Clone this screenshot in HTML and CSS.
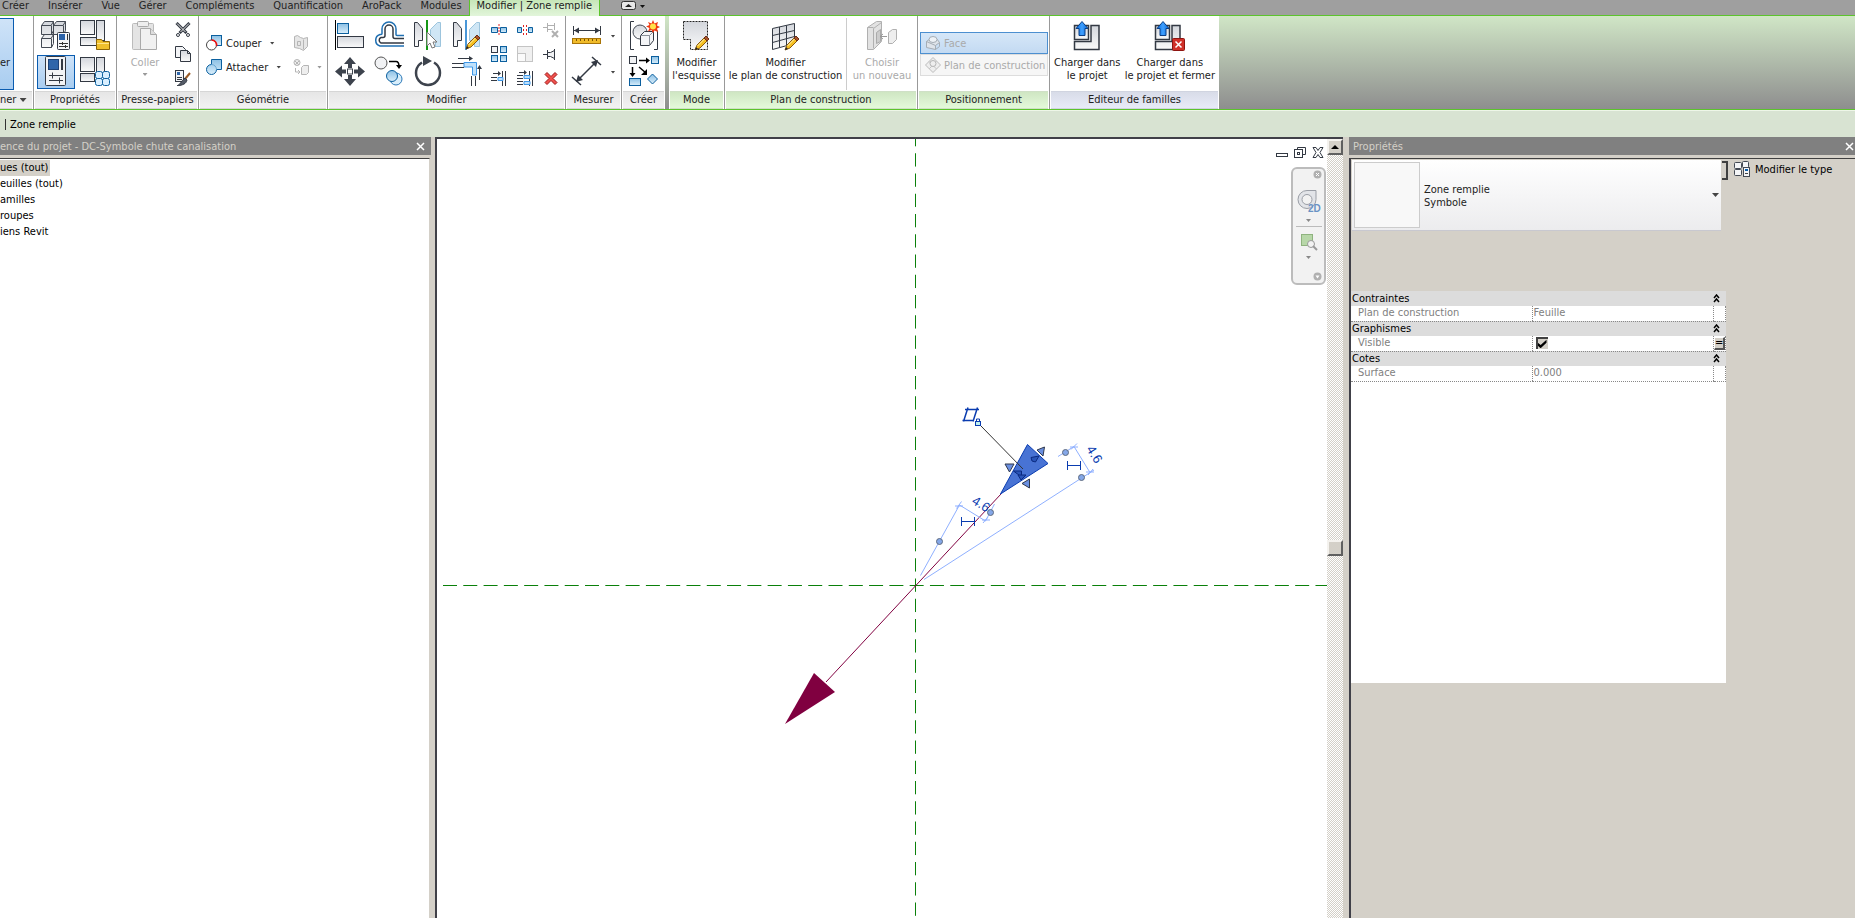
FILE: index.html
```html
<!DOCTYPE html>
<html lang="fr">
<head>
<meta charset="utf-8">
<title>Modifier | Zone remplie</title>
<link rel="stylesheet" href="styles.css">
</head>
<body>
<svg class="defs" aria-hidden="true">
  <defs>
    <linearGradient id="g-grey" x1="0" y1="0" x2="0" y2="1"><stop offset="0" stop-color="#d3d6dc"/><stop offset="1" stop-color="#fafafa"/></linearGradient>
    <linearGradient id="g-blue" x1="0" y1="0" x2="0" y2="1"><stop offset="0" stop-color="#8cc0e4"/><stop offset="1" stop-color="#d9eefb"/></linearGradient>
    <linearGradient id="g-arrow" x1="0" y1="0" x2="1" y2="0"><stop offset="0" stop-color="#0a68d8"/><stop offset=".5" stop-color="#3fa0ff"/><stop offset="1" stop-color="#0a68d8"/></linearGradient>
    <symbol id="pencil" viewBox="0 0 16 16">
      <path d="M1 15l2-5 7-7 3 3-7 7z" fill="#f6c021" stroke="#8a5a10"/><path d="M3.500 11l7-7" stroke="#fff3b0"/><path d="M10 3l2-2 3 3-2 2z" fill="#a8532c" stroke="#6d2f15"/><path d="M1 15l1-3 2 2z" fill="#222"/>
    </symbol>
    <symbol id="chev" viewBox="0 0 7 9"><path d="M1 4l2.500-3L6 4M1 8l2.500-3L6 8" fill="none" stroke="#000" stroke-width="1.500"/></symbol>
  </defs>
</svg>

<header>
  <nav class="tabs">
    <a href="#">Créer</a><a href="#">Insérer</a><a href="#">Vue</a><a href="#">Gérer</a><a href="#">Compléments</a><a href="#">Quantification</a><a href="#">AroPack</a><a href="#">Modules</a><a href="#" class="active">Modifier | Zone remplie</a>
    <button class="mini" aria-label="Réduire le ruban"><svg width="26" height="9"><rect x=".5" y=".5" width="14" height="8" rx="2" fill="#e8e8e8" stroke="#333"/><path d="M4 6h7L7.500 3z" fill="#222"/><path d="M19 4h5l-2.500 3z" fill="#111"/></svg></button>
  </nav>

  <div class="ribbon">
    <section class="panel first">
      <div class="body"><button class="select-btn">er</button></div>
      <h2>ner <i class="caret"></i></h2>
    </section>

    <section class="panel props">
      <div class="body">
        <button class="tool" aria-label="Propriétés du type"><svg width="32" height="32"><g fill="url(#g-grey)" stroke="#444a54"><path d="M1.500 5.500l3-4h9v9l-2 4h-10zM13.500 5.500l3-4h9v9l-2 4h-10zM1.500 18.500l3-4h9v9l-2 4h-10z"/><path d="M1.500 5.500h9.500l2.500-4M11.500 5.500v9M13.500 5.500H23l2.500-4M23.500 5.500v9M1.500 18.500h9.500l2.500-4M11.500 18.500v9" fill="none"/></g><rect x="17.500" y="12.500" width="12" height="17" rx="1" fill="#f4f5f7" stroke="#333943"/><rect x="19" y="14" width="6" height="6" fill="#2b62a8"/><path d="M27.500 14v6M19 23.500h9M19 26.500h9M22.500 22v3M25.500 25v3" stroke="#333"/></svg></button>
        <button class="tool" aria-label="Types de familles"><svg width="32" height="32"><g fill="url(#g-grey)" stroke="#333943"><rect x="1.500" y=".5" width="14" height="14"/><rect x="17.500" y=".5" width="8" height="20"/><rect x="1.500" y="17.500" width="16" height="8"/></g><path d="M17.500 19.500h5l1.500 2h6.500v8h-13z" fill="#f0c02c" stroke="#8c6508"/><path d="M18 23.500h12" stroke="#ffe58a"/></svg></button>
        <button class="tool on" aria-label="Propriétés"><svg width="32" height="32"><rect x="5.500" y=".5" width="20" height="29" rx="1" fill="#f2f3f5" stroke="#333943"/><rect x="8.500" y="3.500" width="10" height="10" fill="#2f66aa" stroke="#1d4379"/><path d="M22 3v11" stroke="#333943" stroke-width="2"/><path d="M9 19.500h14M9 24.500h14M12.500 16.500v6M19.500 21.500v6" stroke="#333943"/></svg></button>
        <button class="tool" aria-label="Catégorie"><svg width="32" height="32"><g fill="url(#g-grey)" stroke="#333943"><rect x="1.500" y="1.500" width="14" height="14"/><rect x="17.500" y="1.500" width="8" height="18"/><rect x="1.500" y="17.500" width="14" height="8"/></g><g fill="#d9efff" stroke="#0b5f9e"><rect x="16.500" y="15.500" width="7" height="7" rx="2"/><rect x="23.500" y="15.500" width="7" height="7" rx="2"/><rect x="16.500" y="22.500" width="7" height="7" rx="2"/><rect x="23.500" y="22.500" width="7" height="7" rx="2"/></g></svg></button>
      </div>
      <h2>Propriétés</h2>
    </section>

    <section class="panel clip">
      <div class="body">
        <button class="big off"><svg width="32" height="32"><rect x="3.500" y="3.500" width="21" height="26" rx="1" fill="#e4e4e4" stroke="#bbb"/><rect x="8.500" y="1.500" width="11" height="5" rx="1" fill="#eee" stroke="#aaa"/><path d="M11.500 8.500h10l6 6v15h-16z" fill="#f1f1f1" stroke="#aaa"/><path d="M21.500 8.500v6h6" fill="#ddd" stroke="#aaa"/></svg><span>Coller</span><i class="caret"></i></button>
        <div class="stack">
          <button class="sm" aria-label="Couper"><svg width="16" height="16"><path d="M1.500 1l10 10M14.500 1l-10 10" stroke="#333943" stroke-width="3"/><path d="M2 1.500l8.500 8.500M14 1.500L5.500 10" stroke="#e8e8e8"/><circle cx="3" cy="13" r="1.500" fill="#fff" stroke="#333943"/><circle cx="13" cy="13" r="1.500" fill="#fff" stroke="#333943"/></svg></button>
          <button class="sm" aria-label="Copier"><svg width="16" height="16"><path d="M.5.500h7l3 3v8H.500z" fill="#f3f4f6" stroke="#333943"/><path d="M5.500 4.500h7l3 3v8h-10z" fill="url(#g-grey)" stroke="#333943"/><path d="M12.500 4.500v3h3" fill="none" stroke="#333943"/></svg></button>
          <button class="sm" aria-label="Copier les propriétés"><svg width="16" height="16"><rect x=".5" y=".5" width="8" height="11" fill="#f3f4f6" stroke="#333943"/><rect x="2" y="2" width="3" height="3" fill="#2f66aa"/><path d="M2 7.500h5M2 9.500h5" stroke="#333943"/><path d="M15 3l-5 6" stroke="#9a5b26" stroke-width="2"/><path d="M10 8l2 2c-1 4-4 5-10 6 3-1 4-5 8-8z" fill="#555c68" stroke="#333943"/></svg></button>
        </div>
      </div>
      <h2>Presse-papiers</h2>
    </section>

    <section class="panel geom">
      <div class="body">
        <div class="geo-col">
          <button class="row"><svg width="16" height="16"><rect x="5.500" y=".5" width="10" height="10" fill="url(#g-blue)" stroke="#0b5f9e"/><circle cx="5.500" cy="10" r="5" fill="#fff" stroke="#444"/><path d="M5.500 5a5 5 0 0 1 5 6" fill="none" stroke="#f01010" stroke-width="1.500"/></svg>Couper<i class="caret"></i></button>
          <button class="row"><svg width="16" height="16"><path d="M5.500 5.500v-5h10v10h-5a5 5 0 1 1-5-5z" fill="url(#g-blue)" stroke="#0b5f9e"/><path d="M10.500 10.500a5 5 0 0 0-5-5" fill="none" stroke="#67a6d2"/></svg>Attacher<i class="caret"></i></button>
        </div>
        <div class="geo-col">
          <button class="row off" aria-label="Ouverture"><svg width="16" height="16"><path d="M1.500 1.500l3-1 3 2 3 1 4-1v9l-4 4-4-2-5-1z" fill="#e6e6e6" stroke="#b5b5b5"/><path d="M10.500 4.500v10M4.500 6.500h3v4h-3z" fill="none" stroke="#b5b5b5"/></svg></button>
          <button class="row off" aria-label="Démolir"><svg width="16" height="16"><circle cx="4" cy="3.500" r="3" fill="#eee" stroke="#b5b5b5"/><path d="M2 2l4 4M6 2l-4 4M2.500 9v4h4M5 11l2 2-2 2" fill="none" stroke="#b5b5b5"/><path d="M8.500 8.500l2-2h5v7l-2 2h-5z" fill="#eee" stroke="#b5b5b5"/></svg><i class="caret"></i></button>
        </div>
      </div>
      <h2>Géométrie</h2>
    </section>

    <section class="panel modify">
      <div class="body">
        <div class="grid4">
          <button class="tool" aria-label="Aligner"><svg width="32" height="32"><path d="M1.500 0v30" stroke="#000"/><rect x="3.500" y="3.500" width="11" height="10" fill="url(#g-blue)" stroke="#0b5f9e"/><rect x="3.500" y="16.500" width="26" height="11" fill="url(#g-grey)" stroke="#333943"/></svg></button>
          <button class="tool" aria-label="Décaler"><svg width="32" height="32"><path d="M31 15.500h-7a1 1 0 0 1-1-1V9a7 7 0 0 0-14 0v4.500a1 1 0 0 1-1 1H7a6 6 0 0 0 0 11.500h24" fill="none" stroke="#1f6fb2" stroke-width="1.500"/><path d="M31 18.500H22a2 2 0 0 1-2-2V9a4 4 0 0 0-8 0v6.500a2 2 0 0 1-2 2H8a3 3 0 0 0 0 5.500h23" fill="none" stroke="#333943" stroke-width="1.500"/></svg></button>
          <button class="tool" aria-label="Symétrie par axe"><svg width="32" height="32"><path d="M2.500 2.500h3l5 6v12h-4v6h-4z" fill="url(#g-grey)" stroke="#333943"/><path d="M28.500 2.500h-3l-7 7v11h5v6h5z" fill="#cfe6f5" stroke="#9cc4dd"/><path d="M15 0v30" stroke="#159715" stroke-width="2"/><path d="M15 12v14l3-3 2 5 3-1-2-5h4z" fill="#fff" stroke="#777"/></svg></button>
          <button class="tool" aria-label="Symétrie, dessiner un axe"><svg width="32" height="32"><path d="M2.500 2.500h3l5 6v12h-4v6h-4z" fill="url(#g-grey)" stroke="#333943"/><path d="M28.500 2.500h-3l-7 7v11h5v6h5z" fill="#cfe6f5" stroke="#9cc4dd"/><path d="M15 0v30" stroke="#4a97d8" stroke-width="2"/><use href="#pencil" x="14" y="14" width="16" height="16"/></svg></button>
          <button class="tool" aria-label="Déplacer"><svg width="32" height="32"><path d="M16 1l6 7h-4v4h-4V8h-4zM16 30l6-7h-4v-4h-4v4h-4zM1 15.500l7-6v4h4v4H8v4zM31 15.500l-7-6v4h-4v4h4v4z" fill="#3d434d"/><rect x="13.500" y="13" width="5" height="5" fill="#fff" stroke="#3d434d"/></svg></button>
          <button class="tool" aria-label="Copier"><svg width="32" height="32"><circle cx="8" cy="7" r="6" fill="#f1f2f4" stroke="#555"/><circle cx="23" cy="23" r="6" fill="#d9eefb" stroke="#2b78b8"/><circle cx="19" cy="20" r="5.500" fill="url(#g-blue)" stroke="#0b5f9e"/><path d="M16 5.500h7q3 0 3 5" fill="none" stroke="#000" stroke-width="1.500"/><path d="M23 9h6l-3 4z"/></svg></button>
          <button class="tool" aria-label="Rotation"><svg width="32" height="32"><path d="M10 6.500A12 12 0 1 0 22 6.500" fill="none" stroke="#3d434d" stroke-width="2.500"/><path d="M11 0l9 5-9 5z" fill="#3d434d"/></svg></button>
          <button class="tool" aria-label="Ajuster/prolonger"><svg width="32" height="32"><path d="M1 7.500h12M1 11.500h12M20.500 20v10M24.500 20v10" stroke="#333943"/><path d="M13 6.500h12.500V19h-4v-8H13z" fill="#bfe0fa" stroke="#3d97e8"/><path d="M7 2.500h14M28.500 24V11" stroke="#333943"/><path d="M18 0l4 2.500L18 5zM26 13l2.500-4 2.500 4z" fill="#333943"/></svg></button>
        </div>
        <div class="grid3">
          <button class="sm" aria-label="Scinder"><svg width="16" height="16"><path d="M.5 5.500h6v5h-6zM9.500 5.500h6v5h-6z" fill="url(#g-blue)" stroke="#0b5f9e"/><path d="M8 2v12" stroke="#e02020" stroke-dasharray="2 1"/></svg></button>
          <button class="sm" aria-label="Scinder avec espace"><svg width="16" height="16"><path d="M.5 5.500h4v5h-4zM11.500 5.500h4v5h-4z" fill="url(#g-blue)" stroke="#0b5f9e"/><path d="M6.500 3v10M9.500 3v10" stroke="#e02020" stroke-dasharray="2 2"/></svg></button>
          <button class="sm off" aria-label="Déverrouiller"><svg width="16" height="16"><path d="M0 5.500h4M4.500 1v9M4.500 3.500h7M4.500 7.500h5M11.500 1v7" fill="none" stroke="#b0b0b0"/><path d="M9 9l6 6M15 9l-6 6" stroke="#b0b0b0" stroke-width="2"/></svg></button>
          <button class="sm" aria-label="Réseau"><svg width="16" height="16"><rect x=".5" y=".5" width="6" height="6" fill="#f1f2f4" stroke="#333943"/><g fill="url(#g-blue)" stroke="#0b5f9e"><rect x="9.500" y=".5" width="6" height="6"/><rect x=".5" y="9.500" width="6" height="6"/><rect x="9.500" y="9.500" width="6" height="6"/></g></svg></button>
          <button class="sm off" aria-label="Echelle"><svg width="16" height="16"><rect x=".5" y=".5" width="15" height="15" fill="#f0f0f0" stroke="#c4c4c4"/><rect x=".5" y="7.500" width="8" height="8" fill="#fafafa" stroke="#c4c4c4"/></svg></button>
          <button class="sm" aria-label="Verrouiller"><svg width="16" height="16"><path d="M0 8.500h4" stroke="#333943"/><path d="M4.500 4v9M11.500 3v11" stroke="#333943"/><path d="M4.500 6.500h3l4-2v8l-4-2h-3z" fill="#f1f2f4" stroke="#333943"/></svg></button>
          <button class="sm" aria-label="Ajuster un élément"><svg width="16" height="16"><path d="M0 7.500h6M0 10.500h6M11.500 1v15M14.500 1v15M2 3.500h7" stroke="#333943"/><path d="M7 7.500h5v3H7z" fill="#bfe0fa" stroke="#3d97e8"/><path d="M7 1l3 2.500L7 6z" fill="#333943"/></svg></button>
          <button class="sm" aria-label="Ajuster plusieurs éléments"><svg width="16" height="16"><path d="M0 5.500h6M0 8.500h6M0 11.500h6M0 14.500h6M12.500 1v15M15.500 1v15M2 2.500h7" stroke="#333943"/><path d="M7 5.500h6v3H7zM7 11.500h6v3H7z" fill="#bfe0fa" stroke="#3d97e8"/><path d="M7 0l3 2.500L7 5z" fill="#333943"/></svg></button>
          <button class="sm" aria-label="Supprimer"><svg width="16" height="16"><path d="M4 2.500l4 4 4-4 2 2-4 4 4 4-2 2-4-4-4 4-2-2 4-4-4-4z" fill="#f0504c" stroke="#a01818"/></svg></button>
        </div>
      </div>
      <h2>Modifier</h2>
    </section>

    <section class="panel measure">
      <div class="body">
        <button class="tool" aria-label="Cotes"><svg width="32" height="32"><path d="M2 10.500h28M2.500 6v9M29.500 6v9" stroke="#333943"/><path d="M3 10.500l5-3v6zM29 10.500l-5-3v6z" fill="#333943"/><rect x="1.500" y="18.500" width="28" height="5" fill="#f0bb2a" stroke="#a87408"/><path d="M5.500 19v2M9.500 19v2M13.500 19v2M17.500 19v2M21.500 19v2M25.500 19v2" stroke="#7a5200"/></svg></button><i class="caret"></i>
        <button class="tool" aria-label="Cote alignée"><svg width="32" height="32"><path d="M6 25L26 5M1 21l9 8M21 1l9 8" stroke="#333943" stroke-width="1.500"/><path d="M5 26l2-7 5 5zM27 4l-2 7-5-5z" fill="#333943"/></svg></button><i class="caret"></i>
      </div>
      <h2>Mesurer</h2>
    </section>

    <section class="panel create">
      <div class="body">
        <button class="tool" aria-label="Créer un groupe"><svg width="32" height="32"><path d="M6 1.500H2.500v28H6M26 29.500h3.500v-19" fill="none" stroke="#333943"/><circle cx="12" cy="12" r="7" fill="url(#g-grey)" stroke="#444a54"/><path d="M12.500 15.500l4-4h9v9l-4 5h-9z" fill="#f4f5f7" stroke="#333943"/><path d="M12.500 15.500h9v10M21.500 15.500l4-4" fill="none" stroke="#8a9099"/><path d="M25 0l1.500 3.500L30 2l-1 3.500 3 1.500-3 1.500L30 12l-3.500-1.500L25 13l-1.500-3L20 11.500 21.500 8 18 6.500 21.500 5 20 2l3.500 1.500z" fill="#f03a12"/><circle cx="25" cy="6.500" r="3" fill="#ffe24a"/></svg></button>
        <button class="tool" aria-label="Créer un assemblage"><svg width="32" height="32"><rect x="1.500" y=".5" width="7" height="7" fill="#f1f2f4" stroke="#333943"/><rect x="23.500" y=".5" width="7" height="7" fill="url(#g-blue)" stroke="#0b5f9e"/><rect x="1.500" y="22.500" width="11" height="7" fill="url(#g-blue)" stroke="#0b5f9e"/><path d="M24.500 18l5 5-5 5-5-5z" fill="url(#g-blue)" stroke="#0b5f9e"/><path d="M11 4.500h9M4.500 11v8M11 11l7 6" stroke="#000" stroke-width="1.500"/><path d="M18 1.500l4 3-4 3zM1.500 17h6l-3 4zM19 13v6h-6z"/></svg></button>
      </div>
      <h2>Créer</h2>
    </section>

    <section class="panel mode ctx">
      <div class="body">
        <button class="big"><svg width="32" height="32"><path d="M2.500 1.500h24v28h-17v-10h-7z" fill="url(#g-grey)" stroke="#222" stroke-dasharray="2 1"/><use href="#pencil" x="13" y="15" width="16" height="16"/></svg><span>Modifier<br>l'esquisse</span></button>
      </div>
      <h2>Mode</h2>
    </section>

    <section class="panel plan ctx">
      <div class="body">
        <button class="big wide"><svg width="32" height="32"><path d="M2.500 8.500l22-5v20l-22 6z" fill="url(#g-grey)" stroke="#333943"/><path d="M9.500 7v20M16.500 5.500v20M2.500 15.500l22-5M2.500 22.500l22-6" stroke="#333943"/><use href="#pencil" x="14" y="15" width="16" height="16"/></svg><span>Modifier<br>le plan de construction</span></button>
        <button class="big off"><svg width="32" height="32"><path d="M1.500 7.500l9-6h5v20l-8 8h-6z" fill="#e2e2e2" stroke="#b0b0b0"/><path d="M7.500 8.500v20M7.500 8.500l8-6M1.500 7.500h6" fill="none" stroke="#b0b0b0"/><path d="M10.500 12.500l4-3v12l-4 2z" fill="#ccc" stroke="#aaa"/><path d="M14 16.500h7M17 14l-3 2.500 3 2.500" fill="none" stroke="#999"/><path d="M22.500 12.500l4-3h4v10l-4 4h-4z" fill="#eee" stroke="#b0b0b0"/></svg><span>Choisir<br>un nouveau</span></button>
      </div>
      <h2>Plan de construction</h2>
    </section>

    <section class="panel place ctx">
      <div class="body">
        <button class="opt on"><svg width="16" height="16"><path d="M1.500 6.500l4-3h6l3 4-4 3v4l-9-2z" fill="#dfe4ea" stroke="#a5adb5"/><path d="M14.500 7.500v4l-4 3M1.500 6.500l9 4" fill="none" stroke="#a5adb5"/><ellipse cx="8" cy="4.500" rx="4" ry="3" fill="#eef2f6" stroke="#a5adb5"/></svg>Face</button>
        <button class="opt"><svg width="16" height="16"><path d="M8 .5L15.500 8 8 15.500.500 8z" fill="#eee" stroke="#bbb"/><path d="M4 4.500l7.500 7.500M11.500 4.500L4 12" stroke="#c4c4c4"/><circle cx="8" cy="6.500" r="3" fill="#eee" stroke="#b5b5b5"/></svg>Plan de construction</button>
      </div>
      <h2>Positionnement</h2>
    </section>

    <section class="panel family">
      <div class="body">
        <button class="big"><svg width="32" height="32"><g fill="url(#g-grey)" stroke="#333943" stroke-width="1.500"><rect x="3.500" y="5.500" width="14" height="14"/><path d="M20 5.500h8v24H3.500v-8H20z"/></g><path d="M11 1.500l6 7h-3v7H8v-7H5z" fill="url(#g-arrow)" stroke="#0b3f86"/></svg><span>Charger dans<br>le projet</span></button>
        <button class="big"><svg width="32" height="32"><g fill="url(#g-grey)" stroke="#333943" stroke-width="1.500"><rect x="1.500" y="5.500" width="14" height="14"/><path d="M18 5.500h8v24H1.500v-8H18z"/></g><path d="M9 1.500l6 7h-3v7H6v-7H3z" fill="url(#g-arrow)" stroke="#0b3f86"/><rect x="18.500" y="18.500" width="12" height="12" rx="1" fill="#d03028" stroke="#8e1410"/><path d="M21.500 21.500l6 6M27.500 21.500l-6 6" stroke="#fff" stroke-width="1.500"/></svg><span>Charger dans<br>le projet et fermer</span></button>
      </div>
      <h2>Editeur de familles</h2>
    </section>
  </div>
  <div class="options"><span class="bar"></span>Zone remplie</div>
</header>

<main>
  <aside class="browser">
    <div class="title"><span>ence du projet - DC-Symbole chute canalisation</span><button aria-label="Fermer"><svg width="9" height="9"><path d="M1 1l7 7M8 1L1 8" stroke="#fff" stroke-width="1.500"/></svg></button></div>
    <ul class="tree">
      <li><span class="sel">ues (tout)</span></li>
      <li>euilles (tout)</li>
      <li>amilles</li>
      <li>roupes</li>
      <li>iens Revit</li>
    </ul>
  </aside>

  <section class="view">
    <div class="canvas">
      <svg class="drawing" viewBox="437 139 890 779" preserveAspectRatio="xMinYMin slice">
        <g stroke="#0a800a" fill="none">
          <path d="M443 585.500H1327" stroke-dasharray="14 6.290"/>
          <path d="M915.500 133V918" stroke-dasharray="13.300 6.950"/>
        </g>
        <path d="M1001 494L826 682" stroke="#800040"/>
        <path d="M814 673l21 19-50 32z" fill="#800040"/>
        <path d="M1027.500 444.500l20.500 19-47.500 30.500z" fill="#4873d4" stroke="#0a3cb0"/>
        <path d="M981 426l42 43" stroke="#333"/>
        <g fill="none" stroke="#8fb0ff">
          <path d="M920.500 575.500L959.500 505l26 16 9-17"/>
          <path d="M924 579.500L1094 470M1090 472.500L1074 446.500l-16 10"/>
          <path d="M955 506h8M956.500 508.500l5-7M982 520h8M983 523l5-6M1070 447h8M1071 449.500l6-6M1086 472h8M1088 475l5-6"/>
        </g>
        <g fill="#84a7e8" stroke="#5f6b80"><circle cx="939.500" cy="541.500" r="3"/><circle cx="990.500" cy="512.500" r="3"/><circle cx="1065.500" cy="452.500" r="3"/><circle cx="1081.500" cy="477.500" r="3"/></g>
        <g stroke="#0a3cb0" fill="none">
          <path d="M961.500 517v9M974.500 517v9M961.500 521.500h13M1067.500 461v9M1080.500 461v9M1067.500 465.500h13"/>
          <path d="M965 409.500h14M962.500 420.500h11M968 407.500l-4.500 14M977.500 407.500l-4.500 14" stroke-width="1.500"/>
          <rect x="975.500" y="421.500" width="5" height="4" fill="#bff0f0"/><path d="M976.500 421v-2h3v2"/>
        </g>
        <g fill="#6a8fe0" stroke="#30394d">
          <path d="M1005 464h9l-4.500 8z"/><path d="M1029.500 479v9l-7.500-4.500z"/><path d="M1044.500 447l-7.500 3 6 6z"/>
        </g>
        <g fill="#2a55b8" stroke="#0a2a80">
          <path d="M1031 457.500l8-1.500-3.500 6-3.500-1z"/><path d="M1013.500 471h8v6z"/><path d="M1018 475h8l-5 5z"/>
        </g>
        <g class="dim">
          <text transform="translate(971 503) rotate(32)">4.6</text>
          <text transform="translate(1086 449) rotate(58)">4.6</text>
        </g>
      </svg>
      <div class="win">
        <button aria-label="Réduire"><svg width="12" height="11"><rect x=".5" y="6.500" width="11" height="3" fill="#fff" stroke="#333943"/></svg></button>
        <button aria-label="Restaurer"><svg width="12" height="11"><path d="M3.500 3V.500h8v7H9" fill="none" stroke="#333943"/><rect x=".5" y="2.500" width="8" height="8" fill="#fff" stroke="#333943"/><rect x="3.500" y="5.500" width="2" height="2" fill="none" stroke="#333943"/></svg></button>
        <button aria-label="Fermer la vue"><svg width="12" height="11"><path d="M1 .5h3l2 3 2-3h3L8 5.500l3 5H8l-2-3-2 3H1l3-5z" fill="#fff" stroke="#333943"/></svg></button>
      </div>
      <div class="nav">
        <button class="end" aria-label="Fermer la barre"><svg width="9" height="9"><circle cx="4.500" cy="4.500" r="4" fill="#b0b0b0"/><path d="M3 3l3 3M6 3L3 6" stroke="#fff"/></svg></button>
        <button aria-label="Roue de navigation"><svg width="26" height="26"><path d="M11 2.500h9v9a9 9 0 1 1-9-9z" fill="#e2e4e8" stroke="#9a9ea6"/><circle cx="11" cy="11.500" r="5" fill="#f2f2f2" stroke="#9a9ea6"/><text x="12" y="24" class="two-d">2D</text></svg></button>
        <i class="caret"></i>
        <hr>
        <button aria-label="Zoom"><svg width="18" height="18"><rect x="1.500" y="1.500" width="11" height="11" fill="#b7d7a8" stroke="#8fb37f"/><circle cx="11" cy="11" r="3.500" fill="#f2f2f2" stroke="#999"/><path d="M13 13l4 4" stroke="#999" stroke-width="2"/></svg></button>
        <i class="caret"></i>
        <button class="end" aria-label="Options de la barre"><svg width="9" height="9"><circle cx="4.500" cy="4.500" r="4" fill="#b0b0b0"/><path d="M2.500 3.500h4l-2 3z" fill="#fff"/></svg></button>
      </div>
    </div>
    <div class="scroll">
      <button aria-label="Défiler vers le haut"><svg width="8" height="4"><path d="M0 4l4-4 4 4z"/></svg></button>
      <span class="space"></span>
      <button class="thumb" aria-label="Position"></button>
      <span class="space"></span>
    </div>
  </section>

  <aside class="properties">
    <div class="title"><span>Propriétés</span><button aria-label="Fermer"><svg width="9" height="9"><path d="M1 1l7 7M8 1L1 8" stroke="#fff" stroke-width="1.500"/></svg></button></div>
    <div class="prop-body">
      <div class="prop-main">
        <button class="type"><span class="thumbnail"></span><span class="type-name">Zone remplie<br>Symbole</span><i class="caret"></i></button>
        <div class="sheet">
          <table>
            <colgroup><col class="c-name"><col><col class="c-btn"></colgroup>
            <tbody>
              <tr class="group"><th colspan="2">Contraintes</th><th><svg width="7" height="9"><use href="#chev"/></svg></th></tr>
              <tr><td>Plan de construction</td><td>Feuille</td><td></td></tr>
              <tr class="group"><th colspan="2">Graphismes</th><th><svg width="7" height="9"><use href="#chev"/></svg></th></tr>
              <tr><td><label for="visible">Visible</label></td><td><input id="visible" type="checkbox" checked></td><td><button class="assoc" aria-label="Associer un paramètre">=</button></td></tr>
              <tr class="group"><th colspan="2">Cotes</th><th><svg width="7" height="9"><use href="#chev"/></svg></th></tr>
              <tr><td>Surface</td><td>0.000</td><td></td></tr>
            </tbody>
          </table>
        </div>
      </div>
      <div class="prop-side">
        <span class="stub"></span>
        <button class="edit"><svg width="16" height="16"><g fill="#f4f5f7" stroke="#444a54"><rect x=".5" y="1.500" width="7" height="6" rx="1"/><rect x="8.500" y=".5" width="6" height="6" rx="1"/><rect x=".5" y="8.500" width="7" height="6" rx="1"/><rect x="9.500" y="6.500" width="6" height="9"/></g><path d="M11 9h3" stroke="#0b5fae" stroke-width="2"/><path d="M11 12.500h3" stroke="#444"/></svg>Modifier le type</button>
      </div>
    </div>
  </aside>
</main>
</body>
</html>
```
FILE: styles.css
```css
* { box-sizing: border-box; }
html, body { height: 100%; }
body {
  margin: 0;
  display: flex;
  flex-direction: column;
  overflow: hidden;
  background: #d4d0c8;
  color: #222;
  font: 11px/13px "DejaVu Sans Condensed", Tahoma, sans-serif;
}
button { margin: 0; padding: 0; border: 0; background: none; color: inherit; font: inherit; }
a { color: inherit; text-decoration: none; }
h2 { margin: 0; font: inherit; }
svg { display: block; flex: none; }
.defs { position: absolute; width: 0; height: 0; }
.caret { display: inline-block; flex: none; width: 5px; height: 3px; background: #444; clip-path: polygon(0 0, 100% 0, 50% 100%); }

/* Ribbon tabs */
.tabs { display: flex; height: 16px; padding-left: 2px; gap: 19px; line-height: 11px; background: #9f9f9f; border-bottom: 1px solid #5cc42c; white-space: nowrap; }
.tabs .active { margin: 0 2px 0 -12px; padding: 0 7px; height: 16px; background: linear-gradient(#c6e6b8, #e2f5da); border: solid #5cc42c; border-width: 0 1px; }
.mini { align-self: flex-start; margin-top: 1px; }

/* Ribbon */
.ribbon { display: flex; height: 94px; border-bottom: 1px solid #5cc42c; background: linear-gradient(#d0e6c6, #8e8e8e); white-space: nowrap; }
.panel { display: flex; flex-direction: column; flex: none; background: #fff; border-right: 1px solid #999; }
.panel h2 { height: 18px; margin: 0 1px; line-height: 15px; text-align: center; background: linear-gradient(#e6e6e6, #f2f2f2); border-top: 1px solid #d6d6d6; border-bottom: 1px solid #d6d6d6; }
.panel .body { flex: 1; min-height: 0; display: flex; }
.panel.ctx h2 { background: linear-gradient(#cfe6c3, #e4f9da); border-color: #cfe0c6; }
.panel.family h2 { background: linear-gradient(#d8dce8, #e8ebf8); border-color: #d0d4e0; }
.tool { display: flex; align-items: center; justify-content: center; }
.tool.on, .select-btn { background: linear-gradient(#cfe3f8, #a9cdf0); border: 1px solid #0a5cb0; }
.sm { display: flex; align-items: center; justify-content: center; }
.big { display: flex; flex-direction: column; align-items: center; padding-top: 4px; text-align: center; }
.big span { margin-top: 4px; }
.off { color: #aaa; }
.off .caret { background: #999; }

.first { width: 34px; }
.first .body { padding: 2px 0 1px; }
.select-btn { width: 14px; border-left: 0; text-align: right; padding: 17px 3px 0 0; }
.panel.first h2 { margin-left: 0; text-align: left; }
.first .caret { width: 7px; height: 4px; vertical-align: 1px; }
.props { width: 83px; }
.props .body { display: grid; grid-template: 34px 34px / 38px 38px; gap: 2px 1px; padding: 3px 3px 0; }
.clip { width: 82px; }
.clip .big { width: 56px; }
.clip .big .caret { margin-top: 4px; }
.stack { display: grid; grid-template: 24px 24px 24px / 20px; padding-top: 2px; }
.geom { width: 129px; }
.geom .body { justify-content: space-between; padding: 15px 5px 0 7px; }
.geo-col { display: flex; flex-direction: column; align-items: flex-start; }
.row { display: flex; align-items: center; gap: 4px; height: 24px; }
.row .caret { margin-left: 4px; }
.modify { width: 238px; }
.modify .body { padding: 2px 0 0 2px; }
.grid4 { display: grid; grid-template: 36px 36px / repeat(4, 39px); }
.grid3 { display: grid; grid-template: 24px 24px 24px / repeat(3, 26px); }
.measure { width: 56px; }
.measure .body { display: grid; grid-template: 36px 36px / 38px 14px; align-items: center; justify-items: center; padding: 2px 0 0 2px; }
.create { width: 43px; border-right: 0; }
.create .body { display: grid; grid-template: 36px 36px / 1fr; padding-top: 2px; }
.mode { width: 56px; margin-left: 4px; }
.mode .big { flex: 1; }
.plan { width: 193px; }
.plan .wide { width: 122px; margin: 2px 0 1px; padding-top: 2px; border-right: 1px solid #ccc; }
.plan .off { flex: 1; }
.place { width: 132px; }
.place .body { flex-direction: column; padding: 16px 1px 0 2px; }
.opt { display: flex; align-items: center; gap: 3px; height: 22px; padding: 0 4px; border: 1px solid #ddd; background: #f6f6f6; color: #aaa; }
.opt.on { background: linear-gradient(#d6e7f8, #c3daf2); border-color: #4c8fd0; }
.family { width: 169px; border-right: 0; }
.family .body { padding: 0 4px; justify-content: space-between; }

.options { display: flex; align-items: center; gap: 4px; height: 27px; padding: 1px 0 0 5px; border-top: 1px solid #eef6e8; background: #d8e3d2; color: #000; }
.options .bar { width: 1px; height: 11px; background: #333; }

/* Main area */
main { flex: 1; min-height: 0; display: flex; }
.title { display: flex; align-items: center; justify-content: space-between; height: 18px; padding-top: 1px; background: #808080; color: #d4d0c8; }
.browser { display: flex; flex-direction: column; width: 431px; margin-right: 4px; }
.browser .title { padding-right: 6px; }
.tree { flex: 1; margin: 3px 1px 0 0; padding: 1px 0 0; list-style: none; background: #fff; border-top: 1px solid #404040; border-right: 1px solid #d4d0c8; line-height: 16px; color: #000; }
.tree li { height: 16px; }
.sel { display: inline-block; padding-right: 2px; background: #d4d0c8; }

.view { flex: 1; display: flex; min-width: 0; border-top: 2px solid #404048; border-left: 2px solid #404048; background: #fff; }
.canvas { position: relative; flex: 1; min-width: 0; overflow: hidden; }
.drawing { width: 100%; height: 100%; }
.dim text { font: 13px/13px "Liberation Sans", sans-serif; fill: #0a3cb0; }
.win { position: absolute; top: 8px; right: 3px; display: flex; gap: 6px; }
.nav { position: absolute; top: 28px; right: 1px; display: flex; flex-direction: column; align-items: center; width: 35px; height: 118px; padding: 0 1px 1px; background: #f2f2f2; border: 2px solid #bcbcbc; border-radius: 6px; }
.nav .end { align-self: flex-end; margin: 1px; }
.nav .caret { background: #888; margin-top: 5px; }
.nav button:nth-child(2) { margin-top: 8px; }
.nav hr { width: 26px; margin: 4px 0 6px; border: 0; border-top: 1px solid #bbb; }
.nav .end:last-child { margin-top: auto; }
.two-d { font: bold 10px/10px "Liberation Sans", sans-serif; fill: #6a92c4; }
.scroll { display: flex; flex-direction: column; width: 16px; background: repeating-conic-gradient(#d4d0c8 0 25%, #fff 0 50%) 0 0 / 2px 2px; }
.scroll button { display: flex; align-items: center; justify-content: center; width: 16px; height: 16px; background: #d4d0c8; border: 2px solid; border-color: #f4f2ee #606060 #606060 #f4f2ee; }
.space { flex: 385; }
.space:last-child { flex: 362; }

.properties { display: flex; flex-direction: column; width: 506px; margin-left: 6px; }
.properties .title { padding: 1px 1px 0 4px; }
.prop-body { flex: 1; display: flex; margin-top: 3px; border-top: 1px solid #404040; border-left: 2px solid #404048; }
.prop-main { display: flex; flex-direction: column; width: 375px; }
.type { display: flex; align-items: center; width: 369px; height: 71px; margin: 1px 0 0 1px; padding: 0 2px; text-align: left; background: linear-gradient(#fff, #ececee); border-bottom: 1px solid #c8c8d0; }
.thumbnail { width: 66px; height: 66px; border: 1px solid #ccc; background: #f8f8f8; }
.type-name { flex: 1; margin-left: 4px; padding-top: 2px; }
.type .caret { width: 7px; height: 4px; }
.sheet { flex: 1; margin: 60px 0 235px; background: #fff; }
table { width: 100%; border-collapse: collapse; table-layout: fixed; line-height: 14px; }
.c-name { width: 181px; }
.c-btn { width: 12px; }
tr { height: 15px; }
th, td { height: 15px; padding: 0; text-align: left; font-weight: normal; }
th { padding-left: 1px; background: #dcdcdc; color: #000; }
th svg { margin-left: -2px; }
td { color: #808080; border-bottom: 1px dotted #888; }
td:first-child { padding-left: 7px; }
td + td { padding-left: 1px; border-left: 1px dotted #888; }
td:last-child { padding: 0; border-right: 1px dotted #888; }
td input { display: block; appearance: none; width: 12px; height: 12px; margin: 1px 2px; border: solid #404040; border-width: 2px 0 0 2px; background: #d4d0c8; }
td input:checked::after { content: ""; display: block; width: 9px; height: 9px; background: #000; clip-path: polygon(0 35%, 35% 65%, 100% 5%, 100% 40%, 35% 100%, 0 70%); }
.assoc { display: block; width: 11px; height: 13px; line-height: 9px; color: #000; background: #d4d0c8; border: solid; border-width: 1px 2px 2px 1px; border-color: #fff #555 #555 #fff; }
.prop-side { display: flex; align-items: flex-start; gap: 6px; padding-top: 2px; margin-left: -4px; }
.stub { width: 6px; height: 19px; border: 2px solid #404040; border-left: 0; background: #d4d0c8; }
.edit { display: flex; align-items: center; gap: 5px; color: #000; white-space: nowrap; }
```
